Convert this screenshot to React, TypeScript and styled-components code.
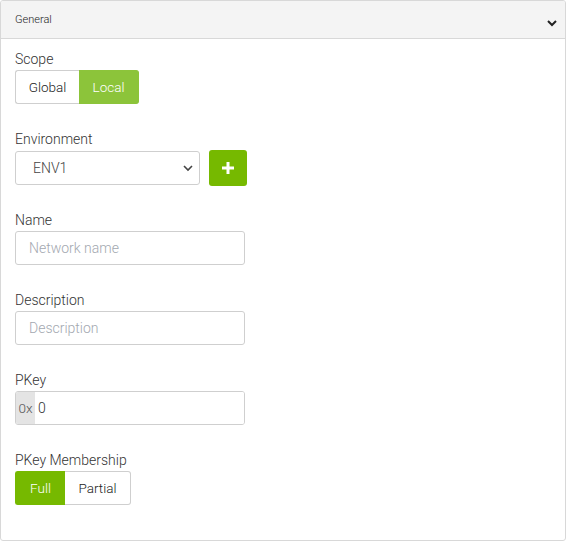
import React, { useState } from 'react';
import styled, { createGlobalStyle } from 'styled-components';

const GlobalStyle = createGlobalStyle`
  html, body {
    margin: 0;
    padding: 0;
    background: #ffffff;
  }
  body {
    font-family: Roboto, "Liberation Sans", Arial, sans-serif;
    font-weight: 300;
    color: #333333;
  }
`;

const Panel = styled.div`
  width: 566px;
  height: 541px;
  box-sizing: border-box;
  border: 1px solid #d8d8d8;
  border-radius: 3px;
  background: #ffffff;
  display: flex;
  flex-direction: column;
  overflow: hidden;
`;

const Header = styled.div`
  height: 39px;
  box-sizing: border-box;
  background: #f4f4f4;
  border-bottom: 1px solid #d8d8d8;
  display: flex;
  align-items: center;
  justify-content: space-between;
  padding: 0 7px 0 14px;
  font-size: 11px;
  color: #222222;
`;

const Chevron = styled.svg`
  width: 12px;
  height: 12px;
  margin-top: 6px;
`;

const Body = styled.div`
  padding: 10px 14px;
  display: flex;
  flex-direction: column;
`;

const Field = styled.div`
  display: flex;
  flex-direction: column;
  align-items: flex-start;
  margin-bottom: 25px;
`;

const Label = styled.label`
  font-size: 14px;
  line-height: 18px;
  height: 18px;
  padding-top: 1px;
  margin-bottom: 2px;
  color: #333333;
`;

const Group = styled.div`
  display: flex;
  height: 34px;
`;

const GroupButton = styled.button<{ $active: boolean; $tone: 'light' | 'dark'; $w: number }>`
  width: ${(p) => p.$w}px;
  height: 34px;
  box-sizing: border-box;
  font-family: inherit;
  font-weight: 300;
  font-size: 13.5px;
  cursor: pointer;
  border: 1px solid
    ${(p) => (p.$active ? (p.$tone === 'light' ? '#8cc43a' : '#76b900') : '#cfcfcf')};
  background: ${(p) => (p.$active ? (p.$tone === 'light' ? '#8cc43a' : '#76b900') : '#ffffff')};
  color: ${(p) => (p.$active ? '#ffffff' : '#222222')};
  padding: 0;
  &:first-child {
    border-radius: 3px 0 0 3px;
    border-right: none;
  }
  &:last-child {
    border-radius: 0 3px 3px 0;
    border-left: none;
  }
`;

const Row = styled.div`
  display: flex;
  align-items: flex-end;
  gap: 9px;
`;

const SelectBox = styled.div`
  position: relative;
  width: 185px;
  height: 34px;
`;

const Select = styled.select`
  width: 100%;
  height: 100%;
  box-sizing: border-box;
  appearance: none;
  border: 1px solid #cfcfcf;
  border-radius: 3px;
  background: #ffffff;
  padding: 0 24px 0 17px;
  font-family: inherit;
  font-weight: 300;
  font-size: 14px;
  color: #444444;
  outline: none;
`;

const SelectArrow = styled.svg`
  position: absolute;
  right: 7px;
  top: 13px;
  width: 10px;
  height: 8px;
  pointer-events: none;
`;

const AddButton = styled.button`
  width: 38px;
  height: 36px;
  margin-bottom: -1px;
  border: none;
  border-radius: 3px;
  background: #76b900;
  display: flex;
  align-items: center;
  justify-content: center;
  cursor: pointer;
  padding: 0;
`;

const TextInput = styled.input`
  width: 230px;
  height: 34px;
  box-sizing: border-box;
  border: 1px solid #cfcfcf;
  border-radius: 3px;
  padding: 0 13px;
  font-family: inherit;
  font-weight: 300;
  font-size: 14px;
  color: #333333;
  outline: none;
  &::placeholder {
    color: #a3a8b0;
  }
`;

const Prefixed = styled.div`
  width: 230px;
  height: 34px;
  box-sizing: border-box;
  border: 1px solid #cfcfcf;
  border-radius: 3px;
  display: flex;
  overflow: hidden;
`;

const Prefix = styled.span`
  width: 19px;
  background: #e4e4e4;
  font-size: 13.5px;
  color: #555555;
  display: flex;
  align-items: center;
  justify-content: center;
`;

const BareInput = styled.input`
  flex: 1;
  border: none;
  outline: none;
  padding: 0 3px;
  font-family: inherit;
  font-weight: 300;
  font-size: 14px;
  color: #333333;
`;

const App: React.FC = () => {
  const [scope, setScope] = useState('Local');
  const [membership, setMembership] = useState('Full');

  return (
    <>
      <GlobalStyle />
      <Panel>
        <Header>
          <span>General</span>
          <Chevron viewBox="0 0 12 12">
            <path d="M2 4 L6 8 L10 4" fill="none" stroke="#222" strokeWidth="2" />
          </Chevron>
        </Header>
        <Body>
          <Field>
            <Label>Scope</Label>
            <Group>
              <GroupButton $tone="light" $w={64} $active={scope === 'Global'} onClick={() => setScope('Global')}>
                Global
              </GroupButton>
              <GroupButton $tone="light" $w={60} $active={scope === 'Local'} onClick={() => setScope('Local')}>
                Local
              </GroupButton>
            </Group>
          </Field>
          <Field>
            <Label>Environment</Label>
            <Row>
              <SelectBox>
                <Select defaultValue="ENV1">
                  <option>ENV1</option>
                </Select>
                <SelectArrow viewBox="0 0 10 8">
                  <path d="M1 2 L5 6 L9 2" fill="none" stroke="#444" strokeWidth="1.6" />
                </SelectArrow>
              </SelectBox>
              <AddButton>
                <svg width="14" height="14" viewBox="0 0 14 14">
                  <path d="M7 1 V13 M1 7 H13" stroke="#fff" strokeWidth="3" />
                </svg>
              </AddButton>
            </Row>
          </Field>
          <Field>
            <Label>Name</Label>
            <TextInput placeholder="Network name" />
          </Field>
          <Field>
            <Label>Description</Label>
            <TextInput placeholder="Description" />
          </Field>
          <Field>
            <Label>PKey</Label>
            <Prefixed>
              <Prefix>0x</Prefix>
              <BareInput defaultValue="0" />
            </Prefixed>
          </Field>
          <Field>
            <Label>PKey Membership</Label>
            <Group>
              <GroupButton $tone="dark" $w={50} $active={membership === 'Full'} onClick={() => setMembership('Full')}>
                Full
              </GroupButton>
              <GroupButton $tone="dark" $w={66} $active={membership === 'Partial'} onClick={() => setMembership('Partial')}>
                Partial
              </GroupButton>
            </Group>
          </Field>
        </Body>
      </Panel>
    </>
  );
};

export default App;
